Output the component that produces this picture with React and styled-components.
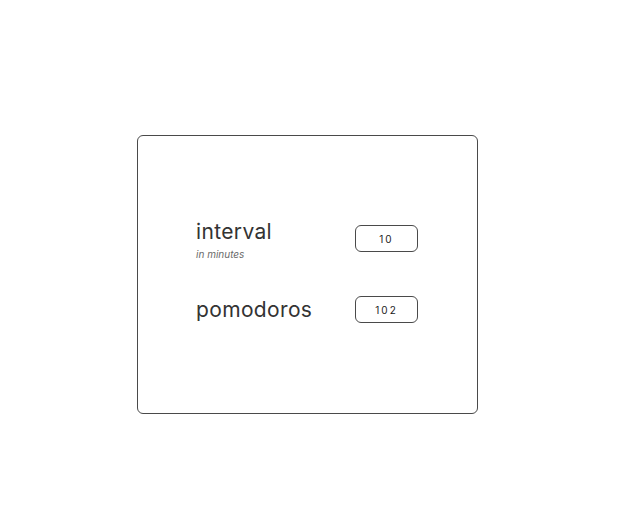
import React from "react";
import styled, { createGlobalStyle } from "styled-components";

const Global = createGlobalStyle`
  html, body { margin: 0; padding: 0; background: #fff; }
  body { font-family: "Inter", "Noto Sans", sans-serif; color: #333; }
`;

const Page = styled.div`
  padding: 135px 0 0 137px;
`;

const Card = styled.div`
  box-sizing: border-box;
  width: 341px;
  height: 279px;
  border: 1.5px solid #4a4a4a;
  border-radius: 6px;
  display: flex;
  flex-direction: column;
  gap: 35px;
  padding: 83px 59px 0 58px;
`;

const Row = styled.div`
  display: flex;
  align-items: ${(p) => (p.$top ? "flex-start" : "center")};
  justify-content: space-between;
`;

const LabelBlock = styled.div`
  display: flex;
  flex-direction: column;
`;

const Label = styled.div`
  font-size: 21px;
  font-weight: 400;
  color: #333;
  line-height: 26px;
  letter-spacing: 0.35px;
`;

const Hint = styled.div`
  font-size: 10px;
  font-style: italic;
  color: #6a6a6a;
  line-height: 14px;
  margin-top: 2px;
`;

const NumberBox = styled.input`
  box-sizing: border-box;
  width: 63px;
  height: 27px;
  border: 1.5px solid #4a4a4a;
  border-radius: 6px;
  background: #fff;
  text-align: center;
  font-family: "Inter", "Noto Sans", sans-serif;
  font-size: 10px;
  letter-spacing: 2px;
  color: #222;
  padding: 0;
  margin-top: ${(p) => p.$offset || 0}px;
  outline: none;
`;

export default function App() {
  return (
    <>
      <Global />
      <Page>
        <Card>
          <Row $top>
            <LabelBlock>
              <Label>interval</Label>
              <Hint>in minutes</Hint>
            </LabelBlock>
            <NumberBox defaultValue="10" $offset={6} />
          </Row>
          <Row>
            <LabelBlock>
              <Label>pomodoros</Label>
            </LabelBlock>
            <NumberBox defaultValue="102" />
          </Row>
        </Card>
      </Page>
    </>
  );
}
